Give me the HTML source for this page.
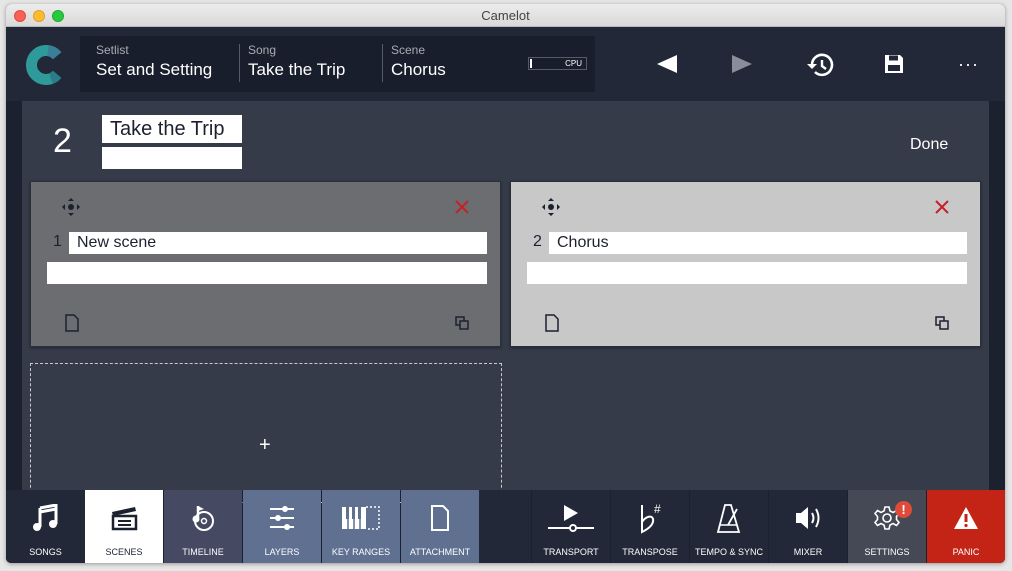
<!DOCTYPE html>
<html><head><meta charset="utf-8"><style>
*{box-sizing:border-box;margin:0;padding:0}
body{width:1012px;height:571px;background:#e6e6e6;position:relative;overflow:hidden;font-family:"Liberation Sans",sans-serif}
.abs{position:absolute}
.win{left:6px;top:4px;width:999px;height:559px;border-radius:5px;overflow:hidden;background:#1c2130;box-shadow:0 1px 4px rgba(0,0,0,.35)}
.title{left:0;top:0;width:999px;height:23px;background:linear-gradient(#ececec,#d9d9d9);border-bottom:1px solid #b8b8b8;text-align:center;font-size:13px;line-height:23px;color:#444}
.dot{top:6px;width:12px;height:12px;border-radius:50%}
.hdr{left:0;top:23px;width:999px;height:74px;background:#222838}
.info{left:74px;top:9px;width:515px;height:56px;background:#191e2c;border-radius:2px}
.lbl{font-size:12px;color:#a9acb4;top:7px;font-weight:300}
.val{font-size:17px;color:#fff;top:24px;font-weight:300}
.sep{top:8px;width:1px;height:38px;background:#555b6a}
.content{left:16px;top:97px;width:967px;height:389px;background:#353b49}
.inp{background:#fff}
.card{border:1px solid #2a2f3a;box-shadow:0 1px 3px rgba(0,0,0,.4)}
.tab{top:486px;height:73px;text-align:center;color:#fff;font-size:9px}
.tab span{position:absolute;left:0;right:0;bottom:6px}
.tab svg{position:absolute;left:50%;top:14px;transform:translateX(-50%)}
</style></head><body>
<div class="abs win">
 <div class="abs title">Camelot</div>
 <div class="abs dot" style="left:8px;background:#fc5f57;border:1px solid #de4a41"></div>
 <div class="abs dot" style="left:27px;background:#fdbc2e;border:1px solid #de9f24"></div>
 <div class="abs dot" style="left:46px;background:#28c840;border:1px solid #1dab2d"></div>
 <div class="abs hdr">
  <svg class="abs" style="left:20px;top:16px" width="40" height="44" viewBox="0 0 40 44">
   <path d="M31.1 12.7 A14.5 14.5 0 1 0 31.1 31.3" fill="none" stroke="#2f9a9a" stroke-width="11"/>
   <path d="M31.1 12.7 A14.5 14.5 0 0 0 22 7.6" fill="none" stroke="#3a7f98" stroke-width="11"/>
   <path d="M31.1 31.3 A14.5 14.5 0 0 1 25 35.6" fill="none" stroke="#2a7c88" stroke-width="11"/>
  </svg>
  <div class="abs info">
   <div class="abs lbl" style="left:16px">Setlist</div><div class="abs val" style="left:16px">Set and Setting</div>
   <div class="abs sep" style="left:159px"></div>
   <div class="abs lbl" style="left:168px">Song</div><div class="abs val" style="left:168px">Take the Trip</div>
   <div class="abs sep" style="left:302px"></div>
   <div class="abs lbl" style="left:311px">Scene</div><div class="abs val" style="left:311px">Chorus</div>
   <div class="abs" style="left:448px;top:21px;width:59px;height:13px;border:1px solid #555b6a;font-size:8px;color:#fff;text-align:right;padding-right:4px;line-height:11px">CPU</div>
   <div class="abs" style="left:450px;top:23px;width:2px;height:9px;background:#fff"></div>
  </div>
  <svg class="abs" style="left:651px;top:28px" width="20" height="18"><path d="M0 9 L20 0 V18 Z" fill="#fff"/></svg>
  <svg class="abs" style="left:726px;top:28px" width="20" height="18"><path d="M20 9 L0 0 V18 Z" fill="#8a8e98"/></svg>
  <svg class="abs" style="left:800px;top:25px" width="28" height="26" viewBox="0 0 28 26"><path d="M6 13 A10 10 0 1 1 9 20" fill="none" stroke="#fff" stroke-width="2.6"/><path d="M1 12 L6 17 L11 12 Z" fill="#fff"/><path d="M16 8 V14 L20 17" fill="none" stroke="#fff" stroke-width="2.4"/></svg>
  <svg class="abs" style="left:878px;top:27px" width="20" height="20" viewBox="0 0 20 20"><path d="M1 1 H16 L19 4 V19 H1 Z" fill="#fff"/><rect x="5" y="1.5" width="9" height="5" fill="#222838"/><rect x="4" y="11" width="12" height="6" fill="#222838"/></svg>
  <div class="abs" style="left:952px;top:27px;color:#fff;font-size:18px;letter-spacing:1px">···</div>
 </div>
 <div class="abs content">
  <div class="abs" style="left:31px;top:21px;font-size:34px;color:#fff">2</div>
  <div class="abs inp" style="left:80px;top:14px;width:140px;height:28px;font-size:20px;color:#1c2130;padding-left:8px;line-height:28px">Take the Trip</div>
  <div class="abs inp" style="left:80px;top:46px;width:140px;height:22px"></div>
  <div class="abs" style="left:888px;top:35px;font-size:16px;color:#fff">Done</div>

  <div class="abs card" style="left:8px;top:80px;width:471px;height:166px;background:#6c6d70">
   <svg class="abs" style="left:30px;top:15px" width="20" height="20" viewBox="0 0 20 20"><circle cx="10" cy="10" r="3" fill="#1c2130"/><path d="M10 1 L13 4 H7Z M10 19 L13 16 H7Z M1 10 L4 7 V13Z M19 10 L16 7 V13Z" fill="#1c2130"/></svg>
   <svg class="abs" style="left:424px;top:18px" width="14" height="14"><path d="M1 1 L13 13 M13 1 L1 13" stroke="#c8202a" stroke-width="2"/></svg>
   <div class="abs" style="left:22px;top:51px;font-size:16px;color:#1c2130">1</div>
   <div class="abs inp" style="left:38px;top:50px;width:418px;height:22px;font-size:16px;color:#1c2130;padding-left:8px;line-height:22px">New scene</div>
   <div class="abs inp" style="left:16px;top:80px;width:440px;height:22px"></div>
   <svg class="abs" style="left:34px;top:132px" width="14" height="18"><path d="M1 1 H9 L13 5 V17 H1 Z" fill="none" stroke="#1c2130" stroke-width="1.5"/></svg>
   <svg class="abs" style="left:424px;top:134px" width="14" height="14"><rect x="1" y="1" width="8" height="8" fill="none" stroke="#1c2130" stroke-width="1.5"/><rect x="5" y="5" width="8" height="8" fill="#6c6d70" stroke="#1c2130" stroke-width="1.5"/></svg>
  </div>

  <div class="abs card" style="left:488px;top:80px;width:471px;height:166px;background:#c8c8c8">
   <svg class="abs" style="left:30px;top:15px" width="20" height="20" viewBox="0 0 20 20"><circle cx="10" cy="10" r="3" fill="#1c2130"/><path d="M10 1 L13 4 H7Z M10 19 L13 16 H7Z M1 10 L4 7 V13Z M19 10 L16 7 V13Z" fill="#1c2130"/></svg>
   <svg class="abs" style="left:424px;top:18px" width="14" height="14"><path d="M1 1 L13 13 M13 1 L1 13" stroke="#c8202a" stroke-width="2"/></svg>
   <div class="abs" style="left:22px;top:51px;font-size:16px;color:#1c2130">2</div>
   <div class="abs inp" style="left:38px;top:50px;width:418px;height:22px;font-size:16px;color:#1c2130;padding-left:8px;line-height:22px">Chorus</div>
   <div class="abs inp" style="left:16px;top:80px;width:440px;height:22px"></div>
   <svg class="abs" style="left:34px;top:132px" width="14" height="18"><path d="M1 1 H9 L13 5 V17 H1 Z" fill="none" stroke="#1c2130" stroke-width="1.5"/></svg>
   <svg class="abs" style="left:424px;top:134px" width="14" height="14"><rect x="1" y="1" width="8" height="8" fill="none" stroke="#1c2130" stroke-width="1.5"/><rect x="5" y="5" width="8" height="8" fill="#c8c8c8" stroke="#1c2130" stroke-width="1.5"/></svg>
  </div>

  <div class="abs" style="left:8px;top:262px;width:472px;height:140px;border:1px dashed #c8cad0"></div>
  <div class="abs" style="left:237px;top:333px;color:#fff;font-size:20px">+</div>
 </div>

 <div class="abs tab" style="left:0;width:79px;background:#222838"><svg width="28" height="28" viewBox="0 0 28 28"><path d="M8 4 L24 1 V20" fill="none" stroke="#fff" stroke-width="3"/><path d="M8 4 V23" stroke="#fff" stroke-width="3"/><path d="M8 8 L24 5" stroke="#fff" stroke-width="3"/><circle cx="5" cy="23" r="4" fill="#fff"/><circle cx="21" cy="20" r="4" fill="#fff"/></svg><span>SONGS</span></div>
 <div class="abs tab" style="left:79px;width:78px;background:#fff;color:#1c2130"><svg width="28" height="28" viewBox="0 0 28 28"><path d="M2 8 L25 3 L26 7 L3 12Z" fill="#1c2130"/><rect x="3" y="12" width="23" height="13" fill="none" stroke="#1c2130" stroke-width="2.5"/><path d="M8 17 H21 M8 21 H21" stroke="#1c2130" stroke-width="2"/></svg><span>SCENES</span></div>
 <div class="abs tab" style="left:158px;width:78px;background:#454a62"><svg width="28" height="28" viewBox="0 0 28 28"><circle cx="15" cy="17" r="9" fill="none" stroke="#fff" stroke-width="2"/><circle cx="15" cy="17" r="2.5" fill="none" stroke="#fff" stroke-width="1.5"/><path d="M9 2 V14" stroke="#fff" stroke-width="2.5"/><path d="M9 2 L15 5 L9 7" fill="#fff"/><circle cx="7" cy="15" r="3.5" fill="#fff"/></svg><span>TIMELINE</span></div>
 <div class="abs tab" style="left:237px;width:78px;background:#5f7090"><svg width="28" height="28" viewBox="0 0 28 28"><path d="M2 5 H26 M2 14 H26 M2 23 H26" stroke="#fff" stroke-width="2"/><circle cx="17" cy="5" r="3" fill="#fff"/><circle cx="10" cy="14" r="3" fill="#fff"/><circle cx="19" cy="23" r="3" fill="#fff"/></svg><span>LAYERS</span></div>
 <div class="abs tab" style="left:316px;width:78px;background:#5f7090"><svg width="40" height="28" viewBox="0 0 40 28"><rect x="1" y="3" width="24" height="22" fill="#fff"/><path d="M7 3 V25 M13 3 V25 M19 3 V25" stroke="#5f7090" stroke-width="1.5"/><rect x="5" y="3" width="3" height="12" fill="#5f7090"/><rect x="11" y="3" width="3" height="12" fill="#5f7090"/><rect x="17" y="3" width="3" height="12" fill="#5f7090"/><path d="M25 3 H38 V25 H25" fill="none" stroke="#fff" stroke-width="1.5" stroke-dasharray="2 2"/></svg><span>KEY RANGES</span></div>
 <div class="abs tab" style="left:395px;width:78px;background:#5f7090"><svg width="28" height="28" viewBox="0 0 28 28"><path d="M6 2 H17 L22 7 V26 H6 Z" fill="none" stroke="#fff" stroke-width="2"/></svg><span>ATTACHMENT</span></div>
 <div class="abs" style="left:473px;top:486px;width:52px;height:73px;background:#222838"></div>
 <div class="abs tab" style="left:526px;width:78px;background:#222838"><svg width="48" height="28" viewBox="0 0 48 28"><path d="M17 1 L31 9 L17 17Z" fill="#fff"/><path d="M1 24 H23 M29 24 H47" stroke="#fff" stroke-width="2"/><circle cx="26" cy="24" r="3" fill="none" stroke="#fff" stroke-width="2"/></svg><span>TRANSPORT</span></div>
 <div class="abs tab" style="left:605px;width:78px;background:#222838"><svg width="28" height="30" viewBox="0 0 28 30"><path d="M6 1 V28 C14 24 18 20 17 15 C16 11 10 12 6 18" fill="none" stroke="#fff" stroke-width="2"/><text x="18" y="9" fill="#fff" font-size="12" font-family="Liberation Sans">#</text></svg><span>TRANSPOSE</span></div>
 <div class="abs tab" style="left:684px;width:78px;background:#222838"><svg width="28" height="30" viewBox="0 0 28 30"><path d="M10 1 H16 L24 28 H3 Z" fill="none" stroke="#fff" stroke-width="1.8"/><path d="M5 21 H22" stroke="#fff" stroke-width="1.5"/><path d="M13 21 L22 5" stroke="#fff" stroke-width="1.8"/></svg><span>TEMPO &amp; SYNC</span></div>
 <div class="abs tab" style="left:763px;width:78px;background:#222838"><svg width="28" height="28" viewBox="0 0 28 28"><path d="M2 9 H7 L14 3 V25 L7 19 H2 Z" fill="#fff"/><path d="M18 9 Q21 14 18 19 M22 5 Q27 14 22 23" fill="none" stroke="#fff" stroke-width="2"/></svg><span>MIXER</span></div>
 <div class="abs tab" style="left:842px;width:78px;background:#454955"><svg width="28" height="28" viewBox="0 0 28 28"><circle cx="14" cy="14" r="4" fill="none" stroke="#fff" stroke-width="1.6"/><path d="M12 3 H16 L17 7 L20 8.5 L23.5 6.5 L26 9.5 L23.5 12.5 V15.5 L26 18.5 L23.5 21.5 L20 19.5 L17 21 L16 25 H12 L11 21 L8 19.5 L4.5 21.5 L2 18.5 L4.5 15.5 V12.5 L2 9.5 L4.5 6.5 L8 8.5 L11 7 Z" fill="none" stroke="#fff" stroke-width="1.6"/></svg><div class="abs" style="left:47px;top:11px;width:17px;height:17px;border-radius:50%;background:#e04a38;color:#fff;font-size:13px;font-weight:bold;line-height:17px">!</div><span>SETTINGS</span></div>
 <div class="abs tab" style="left:921px;width:78px;background:#c42416"><svg width="28" height="28" viewBox="0 0 28 28"><path d="M14 3 L26 25 H2 Z" fill="#fff"/><path d="M14 10 V18" stroke="#c42416" stroke-width="3"/><circle cx="14" cy="21.5" r="1.6" fill="#c42416"/></svg><span>PANIC</span></div>
</div>
</body></html>
